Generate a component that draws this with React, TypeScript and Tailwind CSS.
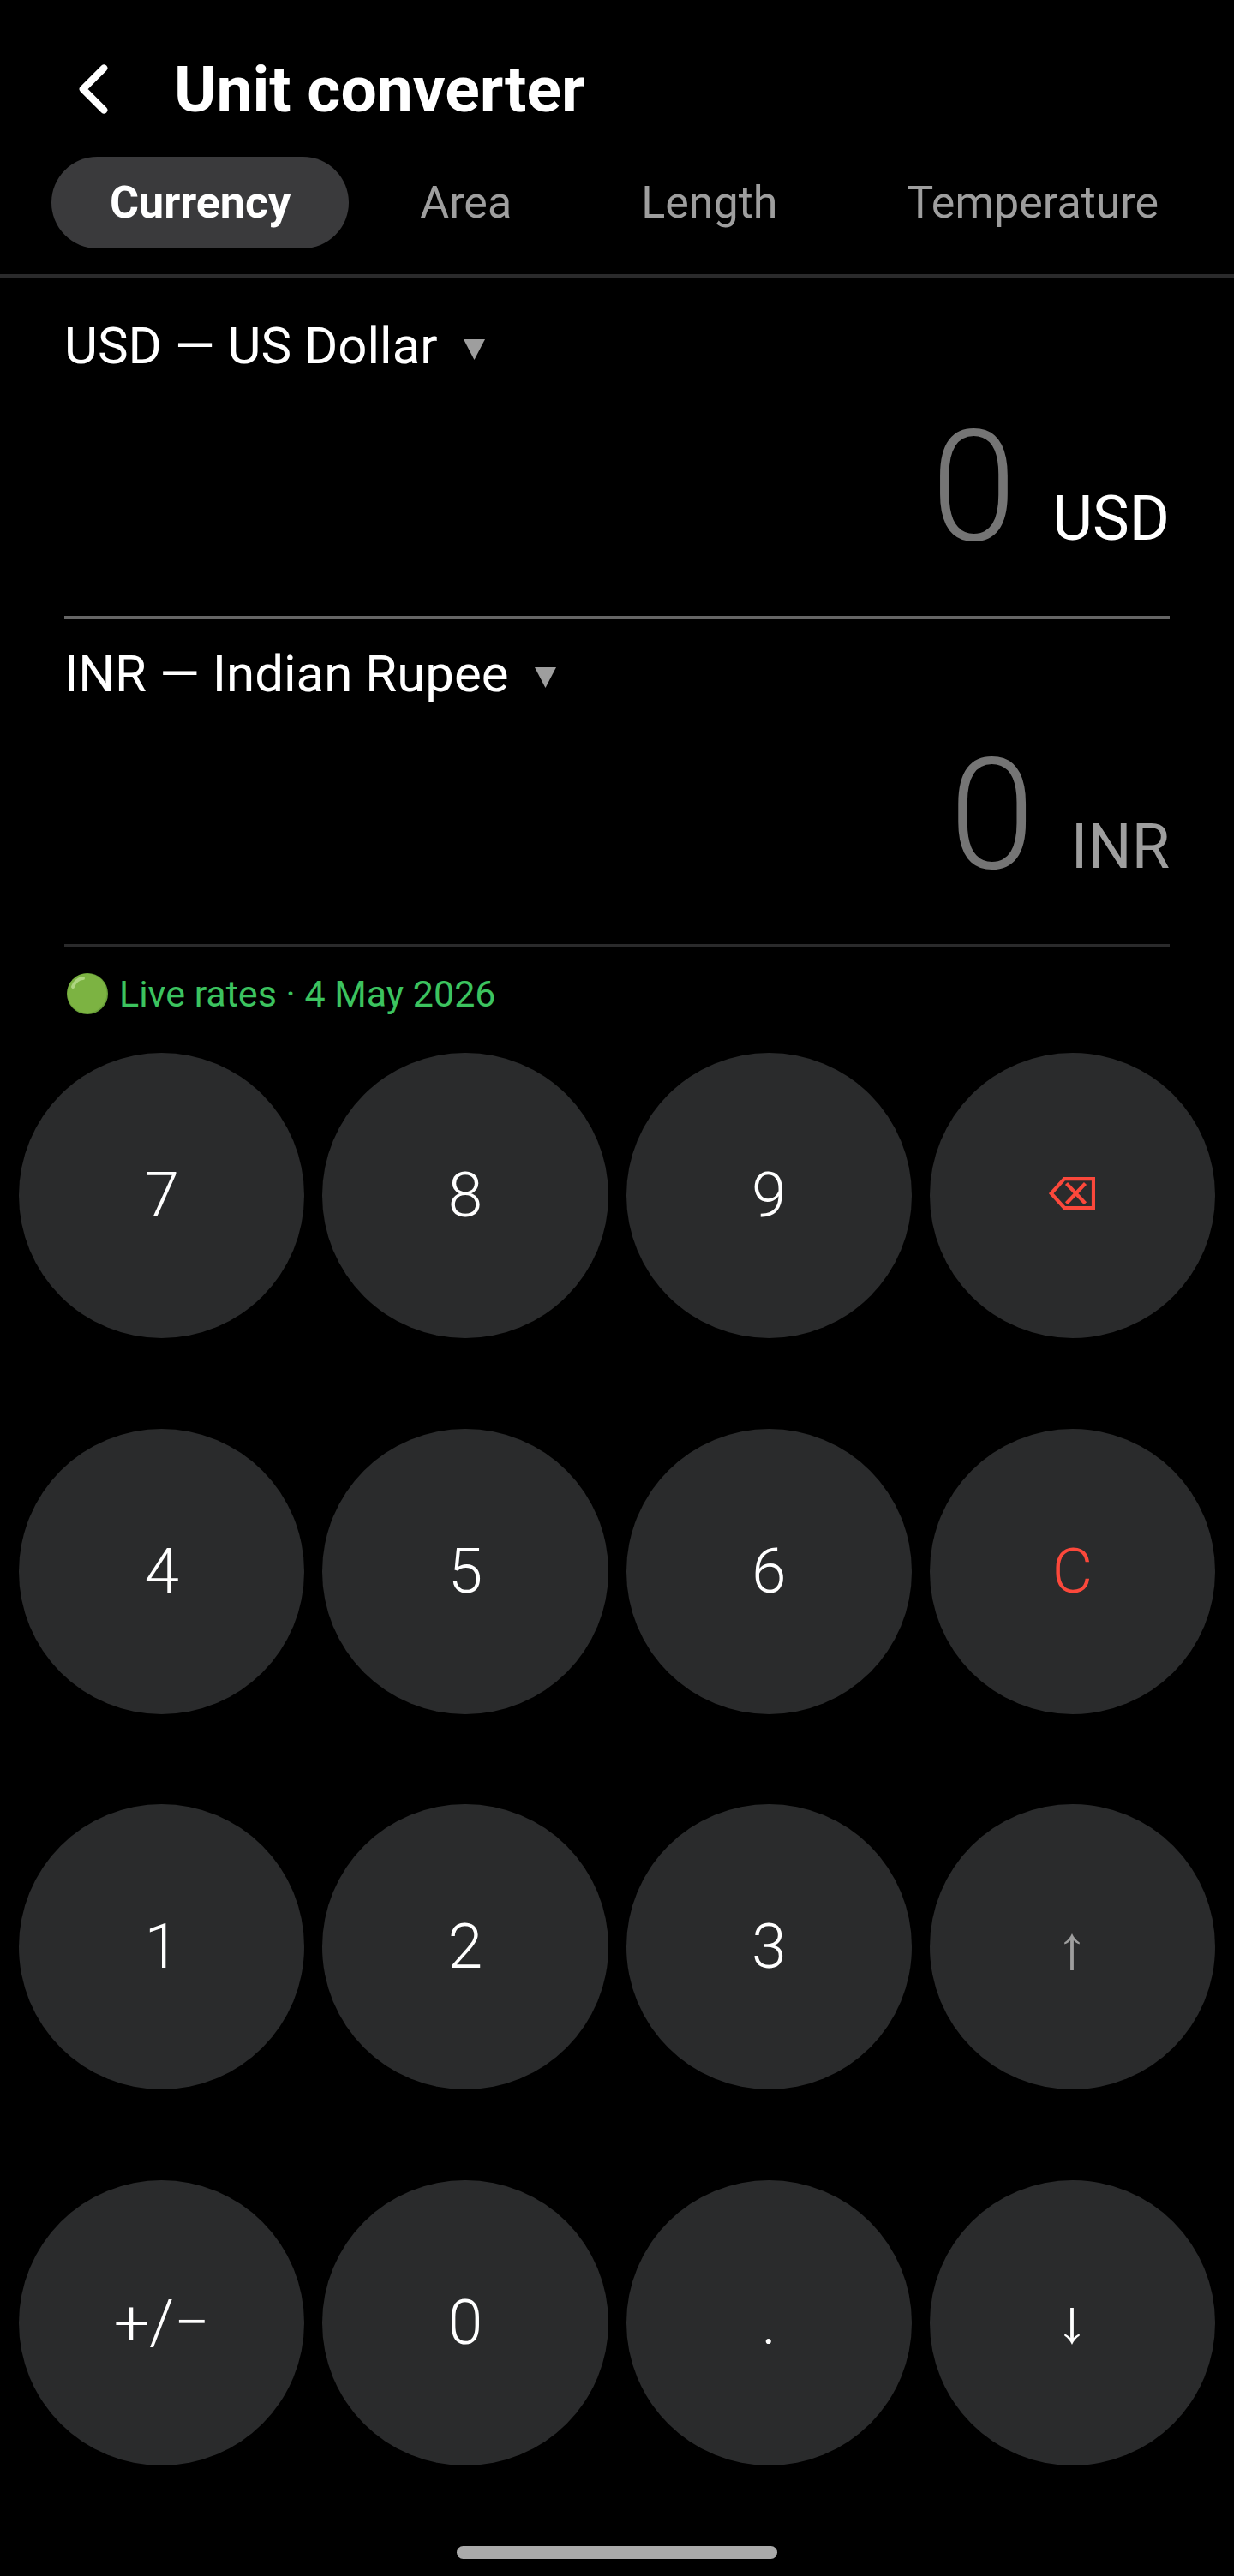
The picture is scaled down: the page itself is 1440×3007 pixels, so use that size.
import { useState } from "react";
import type { ReactNode } from "react";

interface UnitRowProps {
    id: string
    code: string
    value: string
    active: boolean
    onSelect: (code: string) => void;
    onFocus: () => void;
}

interface Key {
    id: string
    content: ReactNode
    color: string
    label?: string
}

const tabs = ["Currency", "Area", "Length", "Temperature"]

const currencies = [
    { code: "USD", name: "US Dollar", rate: 1 },
    { code: "INR", name: "Indian Rupee", rate: 95 },
]

const BackspaceIcon = () => (
    <svg width="54" height="44" viewBox="0 0 54 44" fill="none" stroke="currentColor" strokeWidth="4.200">
        <path d="M18 2.200H52V36H18L2.800 19.100Z" />
        <path d="M20.500 7.500L42.500 30.700M42.500 7.500L20.500 30.700" strokeWidth="4.200" />
    </svg>
)

const ArrowIcon = ({ down = false }: { down?: boolean }) => (
    <svg width="18" height="43" viewBox="0 0 18 43" fill="currentColor" className={down ? "mt-2 rotate-180" : "mt-3"}>
        <path d="M9 0C11 4.500 14 8 17.800 10.500V12.500C15 11.500 12.500 10 10.900 8V43H7.100V8C5.500 10 3 11.500 0.200 12.500V10.500C4 8 7 4.500 9 0Z" />
    </svg>
)

const keys: Key[] = [
    { id: "7", content: "7", color: "text-white" },
    { id: "8", content: "8", color: "text-white" },
    { id: "9", content: "9", color: "text-white" },
    { id: "back", content: <BackspaceIcon />, color: "text-[#fb483b]", label: "Backspace" },
    { id: "4", content: "4", color: "text-white" },
    { id: "5", content: "5", color: "text-white" },
    { id: "6", content: "6", color: "text-white" },
    { id: "clear", content: "C", color: "text-[#fb483b]" },
    { id: "1", content: "1", color: "text-white" },
    { id: "2", content: "2", color: "text-white" },
    { id: "3", content: "3", color: "text-white" },
    { id: "up", content: <ArrowIcon />, color: "text-[#9e9e9e]", label: "Previous field" },
    { id: "sign", content: "+/−", color: "text-white" },
    { id: "0", content: "0", color: "text-white" },
    { id: ".", content: ".", color: "text-white" },
    { id: "down", content: <ArrowIcon down />, color: "text-white", label: "Next field" },
]

const UnitRow = ({ id, code, value, active, onSelect, onFocus }: UnitRowProps) => {
    return (
        <section className={`border-b-3 pt-[30px] pb-[45px] ${active ? "border-[#666666]" : "border-[#2a2a2b]"}`}>
            <div className="flex items-center gap-[30px]">
                <select
                    id={`${id}-unit`}
                    aria-label="Unit"
                    value={code}
                    onChange={(e) => onSelect(e.target.value)}
                    className="h-[70px] appearance-none field-sizing-content bg-black text-[60px] leading-[70px] text-white outline-none"
                >
                    {currencies.map((c) => (
                        <option key={c.code} value={c.code}>{`${c.code} — ${c.name}`}</option>
                    ))}
                </select>
                <svg width="25" height="24" viewBox="0 0 25 24" fill="#9e9e9e" className="mt-2">
                    <path d="M0 0H25L12.500 24Z" />
                </svg>
            </div>
            <div className="mt-6 flex items-baseline gap-[42px]">
                <input
                    id={`${id}-value`}
                    aria-label={`Amount in ${code}`}
                    inputMode="none"
                    readOnly
                    placeholder="0"
                    value={value}
                    onFocus={onFocus}
                    className="h-[211px] min-w-0 flex-1 bg-transparent text-right text-[180px] leading-[211px] font-light text-white outline-none placeholder:text-[#757575]"
                />
                <label htmlFor={`${id}-value`} className={`text-[72px] leading-none ${active ? "text-white" : "text-[#9e9e9e]"}`}>
                    {code}
                </label>
            </div>
        </section>
    )
}

const App = () => {
    const [tab, setTab] = useState("Currency")
    const [units, setUnits] = useState(["USD", "INR"])
    const [active, setActive] = useState(0)
    const [amount, setAmount] = useState("")

    const rateOf = (code: string) => currencies.find((c) => c.code === code)?.rate ?? 1

    const valueOf = (index: number) => {
        if (index === active || amount === "") return amount
        const result = (Number(amount) / rateOf(units[active])) * rateOf(units[index])
        return String(Number(result.toFixed(2)))
    }

    const handleKey = (id: string) => {
        if (id === "back") setAmount(amount.slice(0, -1))
        else if (id === "clear") setAmount("")
        else if (id === "up") setActive(0)
        else if (id === "down") setActive(1)
        else if (id === "sign") setAmount(amount.startsWith("-") ? amount.slice(1) : amount && `-${amount}`)
        else if (id !== "." || !amount.includes(".")) setAmount(amount + id)
    }

    return (
        <div className="flex min-h-screen flex-col bg-black font-[Roboto,sans-serif] text-white">
            <header className="flex items-center gap-[45px] px-[60px] pt-[55px]">
                <button type="button" aria-label="Back">
                    <svg width="98" height="98" viewBox="0 0 24 24" fill="none" stroke="currentColor" strokeWidth="2" strokeLinecap="round" strokeLinejoin="round">
                        <path d="M15 18L9 12L15 6" />
                    </svg>
                </button>
                <h1 className="text-[75px] leading-none font-bold">Unit converter</h1>
            </header>

            <nav className="mt-[30px] flex gap-[15px] overflow-hidden border-b-4 border-[#2a2a2b] pb-[30px] pl-[60px]">
                {tabs.map((name) => (
                    <button
                        key={name}
                        type="button"
                        onClick={() => setTab(name)}
                        className={`h-[107px] shrink-0 rounded-full px-[68px] text-[52px] leading-[62px] ${name === tab ? "bg-[#3a3a3c] font-bold text-white" : "text-[#9e9e9e]"}`}
                    >
                        {name}
                    </button>
                ))}
            </nav>

            <main className="flex flex-1 flex-col">
                <div className="px-[75px] pt-[15px]">
                    {units.map((code, i) => (
                        <UnitRow
                            key={i}
                            id={i === 0 ? "from" : "to"}
                            code={code}
                            value={valueOf(i)}
                            active={i === active}
                            onSelect={(next) => setUnits(units.map((u, j) => (j === i ? next : u)))}
                            onFocus={() => setActive(i)}
                        />
                    ))}
                    <p className="mt-[30px] flex items-center gap-3 text-[43px] leading-[50px] text-[#3cc35f]">
                        <svg width="52" height="48" viewBox="0 0 52 48">
                            <circle cx="27" cy="24" r="24" fill="#689f38" />
                            <circle cx="26.500" cy="23.500" r="23" fill="#7cb342" />
                            <path d="M10 16C12 10 17 6 22 6" stroke="#aed581" strokeWidth="4" strokeLinecap="round" fill="none" />
                        </svg>
                        Live rates · 4 May 2026
                    </p>
                </div>

                <div className="mt-11 grid flex-1 grid-cols-4 content-between gap-x-[21px] gap-y-4 px-[22px]">
                    {keys.map((key) => (
                        <button
                            key={key.id}
                            type="button"
                            aria-label={key.label}
                            onClick={() => handleKey(key.id)}
                            className={`flex aspect-square items-center justify-center rounded-full bg-[#2a2b2c] text-[73px] leading-none font-light ${key.color}`}
                        >
                            {key.content}
                        </button>
                    ))}
                </div>
            </main>

            <div className="mx-auto mt-[94px] mb-5 h-[15px] w-[26%] rounded-full bg-[#aaaaaa]" />
        </div>
    )
}

export default App;
